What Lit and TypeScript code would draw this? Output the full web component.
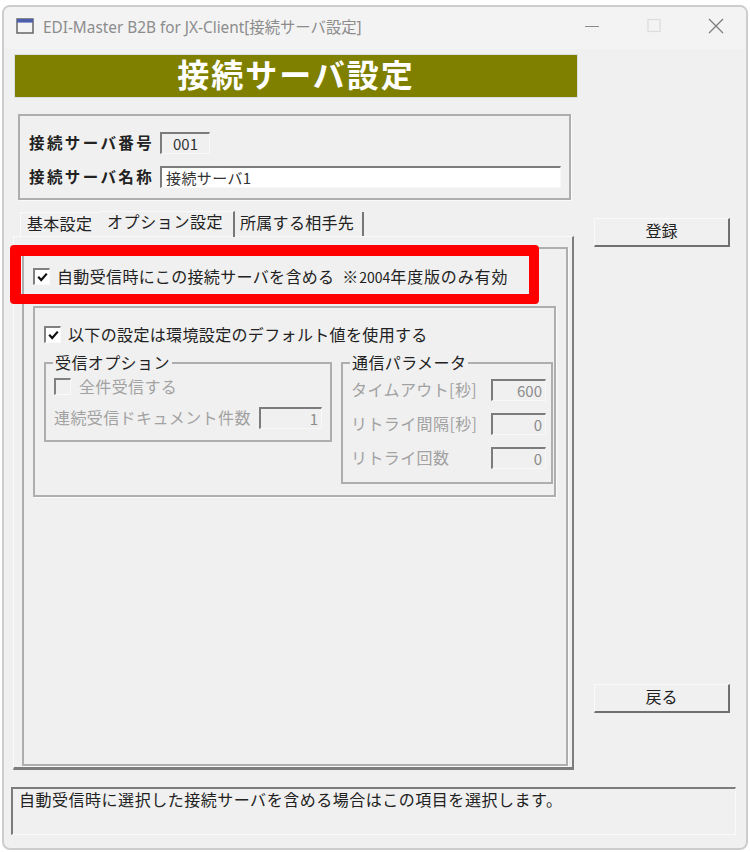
import { LitElement, html, css } from "lit";
import { customElement } from "lit/decorators.js";

@customElement("app-root")
export class AppRoot extends LitElement {
  static styles = css`
    :host { display: block; width: 750px; height: 852px; background: #fff; font-family: "Noto Sans CJK JP", "Noto Sans", sans-serif; font-size: 16px; color: #222; overflow: hidden; }
    * { box-sizing: border-box; }
    .window { position: relative; margin: 5px 0 0 2px; width: 746px; height: 845px; background: #f0f0f0; border: 2px solid #cdcdcd; border-radius: 8px; overflow: hidden; }
    .titlebar { display: flex; align-items: center; height: 42px; background: #f3f3f3; padding: 0 0 4px 12px; }
    .appicon { width: 18px; height: 16px; margin-right: 9px; }
    .title { font-family: "Noto Sans", "Noto Sans CJK JP", sans-serif; font-size: 15.35px; color: #8c8c8c; white-space: nowrap; flex: 1; }
    .winbtns { display: flex; margin-right: 22px; gap: 46px; align-items: center; }
    .winbtns svg { display: block; width: 16px; height: 16px; }
    .main { display: flex; padding: 6px 0 0 11px; height: 712px; }
    .left { width: 562px; }
    .banner { height: 42px; background: #808000; color: #fff; display: flex; align-items: center; justify-content: center; font-size: 32px; font-weight: 700; letter-spacing: 2px; padding-bottom: 6px; box-shadow: 0 0 0 1px #ddd; }
    .idbox { margin: 17px 0 0 3px; width: 553px; height: 86px; border: 2px solid #aeaeae; padding: 16px 0 0 9px; display: flex; flex-direction: column; gap: 12px; box-shadow: 1px 1px 0 #fafafa; }
    .idrow { display: flex; align-items: center; height: 22px; }
    .idlabel { width: 131px; font-weight: 700; font-size: 15.5px; letter-spacing: 2.4px; white-space: nowrap; color: #222; padding-bottom: 2px; }
    .sunken { border-style: solid; border-width: 2px 1px 1px 2px; border-color: #7c7c7c #f8f8f8 #f8f8f8 #7c7c7c; height: 22px; display: flex; align-items: center; font-size: 15px; color: #333; padding-bottom: 1px; }
    .f001 { width: 50px; padding-left: 11px; }
    .fname { width: 401px; background: #fff; padding-left: 4px; letter-spacing: .4px; }
    .tabs { display: flex; margin: 12px 0 0 5px; height: 24px; align-items: flex-end; }
    .tab { white-space: nowrap; letter-spacing: .3px; display: flex; align-items: center; height: 24px; padding-bottom: 4px; }
    .tab1 { width: 80px; padding-left: 6px; border-top: 1px solid #fafafa; border-left: 1px solid #fafafa; }
    .tab2 { width: 135px; padding-left: 7px; padding-bottom: 8px; height: 26px; margin-bottom: -1px; margin-top: -3px; letter-spacing: .6px; border-right: 2px solid #777; border-top: 1px solid #fafafa; }
    .tab3 { width: 128px; padding-left: 4px; border-right: 2px solid #777; margin-left: 1px; }
    .panel { width: 561px; height: 534px; margin-left: -2px; border-right: 2px solid #7d7d7d; border-bottom: 3px solid #7d7d7d; border-top: 1px solid #fafafa; border-left: 1px solid #fafafa; padding: 10px 0 0 8px; }
    .frame { width: 546px; height: 519px; border: 2px solid #aeaeae; padding: 0 0 0 9px; box-shadow: 1px 1px 0 #fafafa; }
    .check { display: flex; align-items: center; height: 18px; white-space: nowrap; letter-spacing: .35px; padding-bottom: 3px; }
    .box { width: 17px; height: 17px; border-style: solid; border-width: 2px 1px 1px 2px; border-color: #808080 #fafafa #fafafa #808080; background: #fff; margin-right: 7px; flex: none; display: flex; align-items: center; justify-content: center; align-self: flex-start; }
    .box svg { width: 11px; height: 10px; display: block; }
    .box.off { background: #f0f0f0; }
    .top { margin-top: 19px; }
    .note { letter-spacing: .85px; }
    .inner { width: 523px; height: 191px; margin-top: 20px; border: 2px solid #aeaeae; padding: 0 0 0 9px; box-shadow: 1px 1px 0 #fafafa; }
    .inner > .check { margin-top: 18px; }
    .groups { display: flex; gap: 9px; align-items: flex-start; margin-top: 18px; }
    .group { border: 2px solid #aeaeae; flex: none; padding: 0 0 0 8px; }
    .g1 { width: 288px; height: 80px; }
    .g2 { width: 212px; height: 122px; }
    .legend { background: #f0f0f0; width: fit-content; margin: -11px 0 0 -1px; height: 20px; line-height: 18px; padding: 0 2px; letter-spacing: .4px; white-space: nowrap; }
    .dis { color: #a2a2a2; letter-spacing: .4px; white-space: nowrap; padding-bottom: 2px; }
    .g1 .check { margin-top: 5px; padding-bottom: 2px; letter-spacing: .35px; }
    .g1 .box { margin-right: 8px; }
    .countrow { display: flex; align-items: center; margin: 11px 0 0 0; height: 22px; }
    .countrow .dis { width: 205px; }
    .fdis { height: 22px; justify-content: flex-end; padding-right: 3px; color: #8b8b8b; font-size: 15px; }
    .fc { width: 63px; }
    .prow { display: flex; align-items: center; justify-content: space-between; height: 22px; width: 195px; margin-bottom: 12px; }
    .g2 .rows { margin-top: 6px; }
    .fp { width: 55px; }
    .right { margin-left: 17px; display: flex; flex-direction: column; }
    .btn { width: 136px; height: 29px; display: flex; align-items: center; justify-content: center; border-style: solid; border-width: 1px 2px 2px 1px; border-color: #fafafa #707070 #707070 #fafafa; color: #222; padding-bottom: 5px; }
    .b1 { margin-top: 163px; }
    .b2 { margin-top: 437px; }
    .status { margin: 26px 0 0 7px; width: 725px; height: 48px; border-style: solid; border-width: 2px 1px 1px 2px; border-color: #7c7c7c #fafafa #fafafa #7c7c7c; padding: 0 0 0 6px; line-height: 20px; letter-spacing: .52px; white-space: nowrap; color: #222; }
    .n { font-size: 14px; letter-spacing: 0; }
    .red { position: absolute; left: 6px; top: 238px; width: 529px; height: 59px; border-style: solid; border-color: #ff0000; border-width: 11px 10px 10px 11px; border-radius: 4px; }
  `;

  private tick() {
    return html`<svg viewBox="0 0 11 10"><path d="M1.2 4.8 L4.2 8 L9.8 1.6" fill="none" stroke="#111" stroke-width="2.2"/></svg>`;
  }

  render() {
    return html`
      <div class="window">
        <div class="titlebar">
          <svg class="appicon" viewBox="0 0 18 16">
            <rect x="1" y="1" width="16" height="14" fill="#f4f4f4" stroke="#6e6e6e" stroke-width="1.6"/>
            <rect x="1" y="1" width="16" height="3.6" fill="#4d5fae"/>
          </svg>
          <div class="title">EDI-Master B2B for JX-Client[接続サーバ設定]</div>
          <div class="winbtns">
            <svg viewBox="0 0 16 16"><path d="M1 8.5h14" stroke="#8a8a8a" stroke-width="1.2"/></svg>
            <svg viewBox="0 0 16 16"><rect x="2" y="1.5" width="12" height="12" fill="none" stroke="#dcdcdc" stroke-width="1.2"/></svg>
            <svg viewBox="0 0 16 16"><path d="M1 1l14 14M15 1L1 15" stroke="#7d7d7d" stroke-width="1.3"/></svg>
          </div>
        </div>
        <div class="main">
          <div class="left">
            <div class="banner">接続サーバ設定</div>
            <div class="idbox">
              <div class="idrow"><span class="idlabel">接続サーバ番号</span><span class="sunken f001">001</span></div>
              <div class="idrow"><span class="idlabel">接続サーバ名称</span><span class="sunken fname">接続サーバ1</span></div>
            </div>
            <div class="tabs">
              <div class="tab tab1">基本設定</div>
              <div class="tab tab2">オプション設定</div>
              <div class="tab tab3">所属する相手先</div>
            </div>
            <div class="panel">
              <div class="frame">
                <div class="check top"><span class="box">${this.tick()}</span><span>自動受信時にこの接続サーバを含める&nbsp; <span class="note">※<span class="n">2004</span>年度版のみ有効</span></span></div>
                <div class="inner">
                  <div class="check"><span class="box">${this.tick()}</span>以下の設定は環境設定のデフォルト値を使用する</div>
                  <div class="groups">
                    <div class="group g1">
                      <div class="legend">受信オプション</div>
                      <div class="check dis"><span class="box off"></span>全件受信する</div>
                      <div class="countrow"><span class="dis">連続受信ドキュメント件数</span><span class="sunken fdis fc">1</span></div>
                    </div>
                    <div class="group g2">
                      <div class="legend">通信パラメータ</div>
                      <div class="rows">
                        <div class="prow"><span class="dis">タイムアウト[秒]</span><span class="sunken fdis fp">600</span></div>
                        <div class="prow"><span class="dis">リトライ間隔[秒]</span><span class="sunken fdis fp">0</span></div>
                        <div class="prow"><span class="dis">リトライ回数</span><span class="sunken fdis fp">0</span></div>
                      </div>
                    </div>
                  </div>
                </div>
              </div>
            </div>
          </div>
          <div class="right">
            <div class="btn b1">登録</div>
            <div class="btn b2">戻る</div>
          </div>
        </div>
        <div class="status">自動受信時に選択した接続サーバを含める場合はこの項目を選択します。</div>
        <div class="red"></div>
      </div>
    `;
  }
}
